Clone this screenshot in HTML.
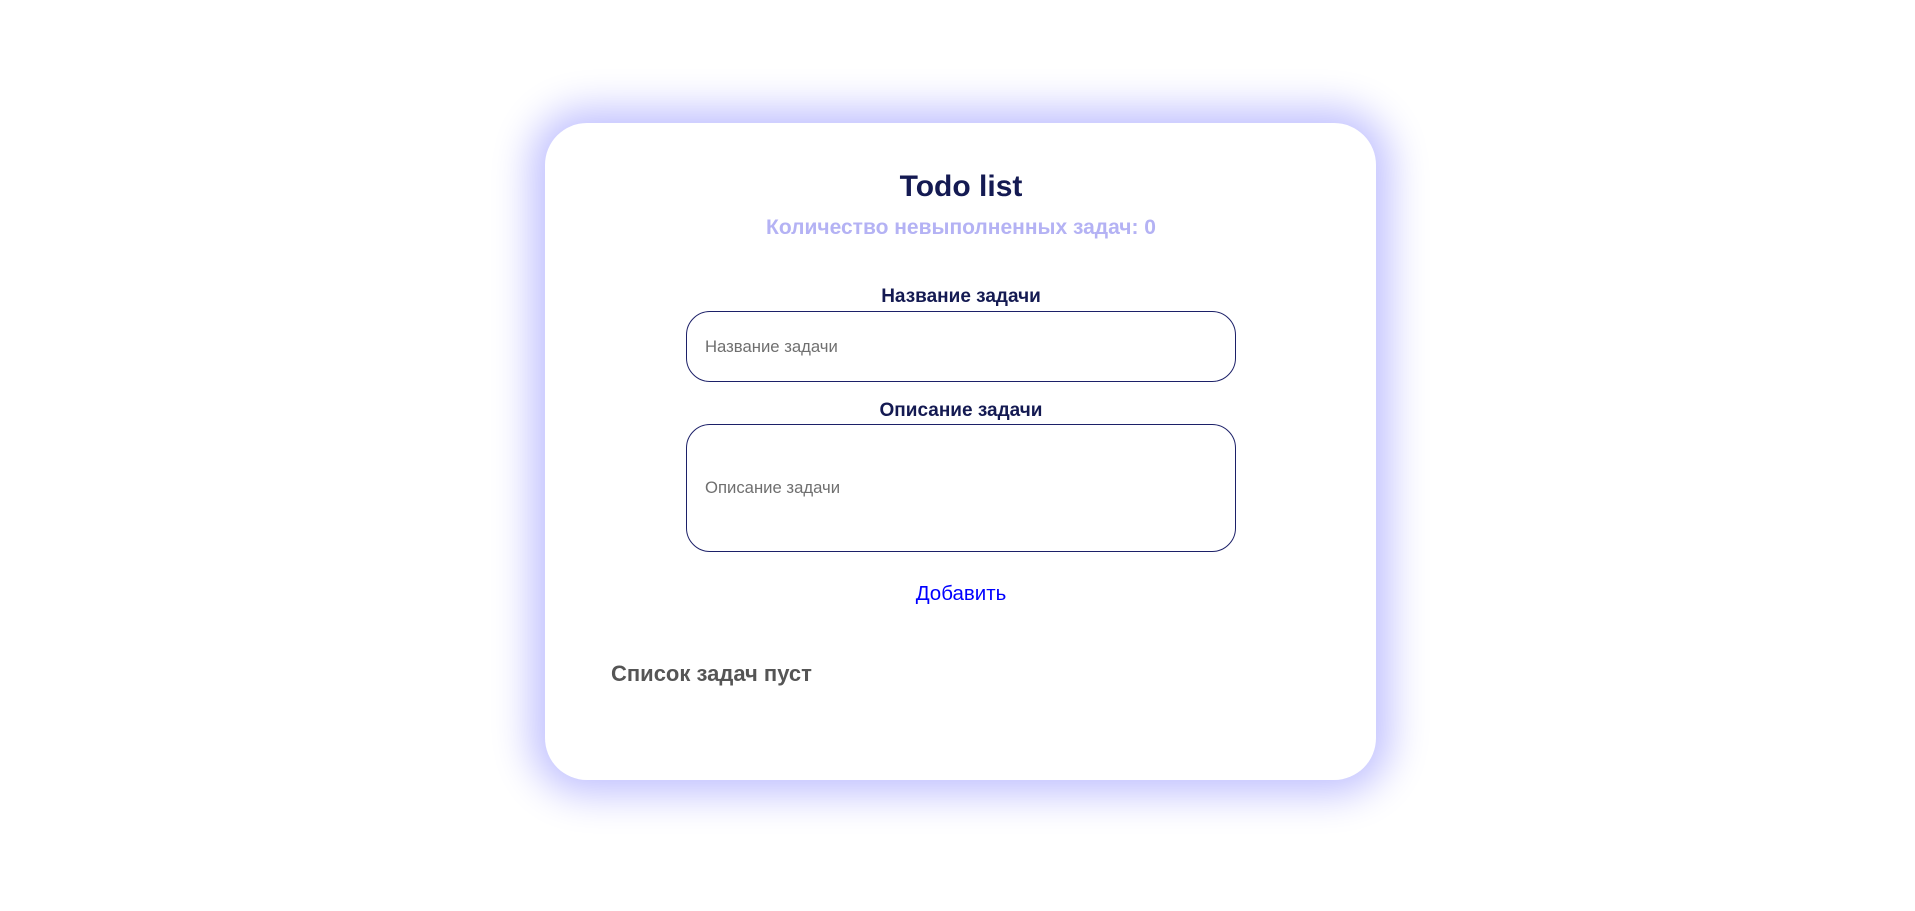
<!DOCTYPE html>
<html><head><meta charset="utf-8"><style>
html,body{margin:0;padding:0;width:1915px;height:911px;background:#fff;overflow:hidden;font-family:"Liberation Sans","DejaVu Sans",sans-serif;}
.card{position:absolute;left:545px;top:123px;width:831px;height:657px;background:#fff;border-radius:42px;box-shadow:0 0 40px 14px #c0c0ff;}
.t{position:absolute;left:0;width:1922px;text-align:center;}
.title{top:170px;font-size:30px;font-weight:bold;color:#141a52;}
.sub{top:216px;font-size:21px;font-weight:bold;color:#b4b2f4;}
.lab{font-size:19px;font-weight:bold;color:#141a52;}
.box{position:absolute;left:686px;width:550px;border:1px solid #1c2068;border-radius:24px;box-sizing:border-box;}
.ph{position:absolute;left:705px;font-size:16.7px;color:#6f6f6f;}
.add{top:582px;font-size:20.5px;color:#0000ff;}
.empty{position:absolute;left:611px;top:661px;font-size:22px;font-weight:bold;color:#555;}
</style></head><body>
<div class="card"></div>
<div class="t title">Todo list</div>
<div class="t sub">Количество невыполненных задач: 0</div>
<div class="t lab" style="top:286px">Название задачи</div>
<div class="box" style="top:311px;height:71px"></div>
<div class="ph" style="top:337px">Название задачи</div>
<div class="t lab" style="top:400px">Описание задачи</div>
<div class="box" style="top:424px;height:128px"></div>
<div class="ph" style="top:478px">Описание задачи</div>
<div class="t add">Добавить</div>
<div class="empty">Список задач пуст</div>
</body></html>
